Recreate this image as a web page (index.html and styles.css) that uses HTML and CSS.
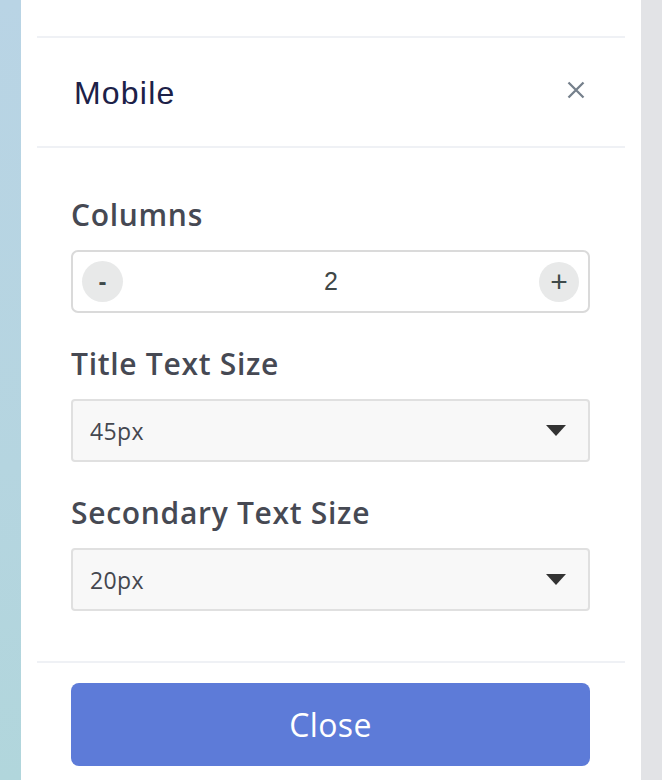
FILE: index.html
```html
<!DOCTYPE html>
<html>
<head>
<meta charset="utf-8">
<link rel="stylesheet" href="styles.css">
</head>
<body>
<div class="screen">
  <div class="backdrop-left"></div>
  <div class="panel">
    <div class="divider first"></div>
    <div class="header">
      <span class="title">Mobile</span>
      <button class="x-btn" aria-label="Close">
        <svg width="18" height="18" viewBox="0 0 18 18"><path d="M1.5 1.5 L16.5 16.5 M16.5 1.5 L1.5 16.5" stroke="#76808c" stroke-width="2.3" fill="none"/></svg>
      </button>
    </div>
    <div class="divider"></div>
    <div class="body">
      <div class="field">
        <div class="label">Columns</div>
        <div class="stepper">
          <span class="step-btn">-</span>
          <span class="step-val">2</span>
          <span class="step-btn plus">+</span>
        </div>
      </div>
      <div class="field">
        <div class="label">Title Text Size</div>
        <div class="select"><span>45px</span><span class="caret"></span></div>
      </div>
      <div class="field">
        <div class="label">Secondary Text Size</div>
        <div class="select"><span>20px</span><span class="caret"></span></div>
      </div>
    </div>
    <div class="divider"></div>
    <div class="footer">
      <button class="close-btn">Close</button>
    </div>
  </div>
  <div class="backdrop-right"></div>
</div>
</body>
</html>
```

FILE: styles.css
```css
html, body {
  margin: 0;
  padding: 0;
  height: 100%;
  overflow: hidden;
}
.screen {
  display: flex;
  height: 780px;
  width: 662px;
}
.backdrop-left {
  width: 21px;
  flex: none;
  background: linear-gradient(180deg, #b9d4e5 0%, #b5d5e0 60%, #b1d6dc 100%);
}
.backdrop-right {
  width: 21px;
  flex: none;
  background: #e2e3e6;
}
.panel {
  width: 620px;
  flex: none;
  background: #ffffff;
  display: flex;
  flex-direction: column;
}
.divider {
  height: 2px;
  background: #eff1f5;
  margin: 0 16px;
  flex: none;
}
.divider.first {
  margin-top: 36px;
}
.header {
  height: 108px;
  display: flex;
  align-items: center;
  justify-content: space-between;
  padding: 0 56px 0 53px;
}
.title {
  font-family: "Liberation Sans", Arial, sans-serif;
  font-size: 32px;
  letter-spacing: 1.2px;
  color: #1c2148;
  margin-top: 2px;
}
.x-btn {
  border: 0;
  background: none;
  padding: 0;
  width: 18px;
  height: 18px;
  display: flex;
  margin-top: -5px;
}
.body {
  padding: 48px 51px 50px 50px;
  display: flex;
  flex-direction: column;
  gap: 32px;
}
.field {
  display: flex;
  flex-direction: column;
  gap: 18px;
}
.label {
  font-family: "Open Sans", Lato, sans-serif;
  font-weight: 600;
  font-size: 30px;
  line-height: 36px;
  color: #464953;
  letter-spacing: 0.7px;
  padding-top: 1px;
  margin-bottom: -1px;
}
.stepper {
  height: 59px;
  border: 2px solid #dadada;
  border-radius: 7px;
  display: flex;
  align-items: center;
  justify-content: space-between;
  padding: 0 9px;
}
.step-btn {
  width: 41px;
  height: 41px;
  border-radius: 50%;
  background: #e8e9e9;
  display: flex;
  align-items: center;
  justify-content: center;
  font-family: "Liberation Sans", Arial, sans-serif;
  font-weight: 700;
  font-size: 24px;
  color: #3f4a4a;
  line-height: 1;
}
.step-btn.plus {
  width: 40px;
  height: 40px;
  font-size: 30px;
  font-weight: 400;
}
.step-val {
  font-family: "Liberation Sans", Arial, sans-serif;
  font-size: 25px;
  color: #3f4747;
}
.select {
  height: 59px;
  border: 2px solid #e0e0e0;
  border-radius: 4px;
  background: #f8f8f8;
  display: flex;
  align-items: center;
  justify-content: space-between;
  padding: 0 22px 0 17px;
  font-family: "Open Sans", Lato, sans-serif;
  font-size: 23px;
  letter-spacing: 0.4px;
  color: #44474f;
}
.caret {
  width: 0;
  height: 0;
  border-left: 10px solid transparent;
  border-right: 10px solid transparent;
  border-top: 11px solid #333333;
}
.footer {
  padding: 20px 51px 0 50px;
}
.close-btn {
  width: 100%;
  height: 83px;
  border: 0;
  border-radius: 8px;
  background: #5d7bd8;
  color: #ffffff;
  font-family: "Open Sans", "Noto Sans", sans-serif;
  font-size: 32px;
  font-weight: 500;
  letter-spacing: 0.4px;
  padding: 0;
}
```
